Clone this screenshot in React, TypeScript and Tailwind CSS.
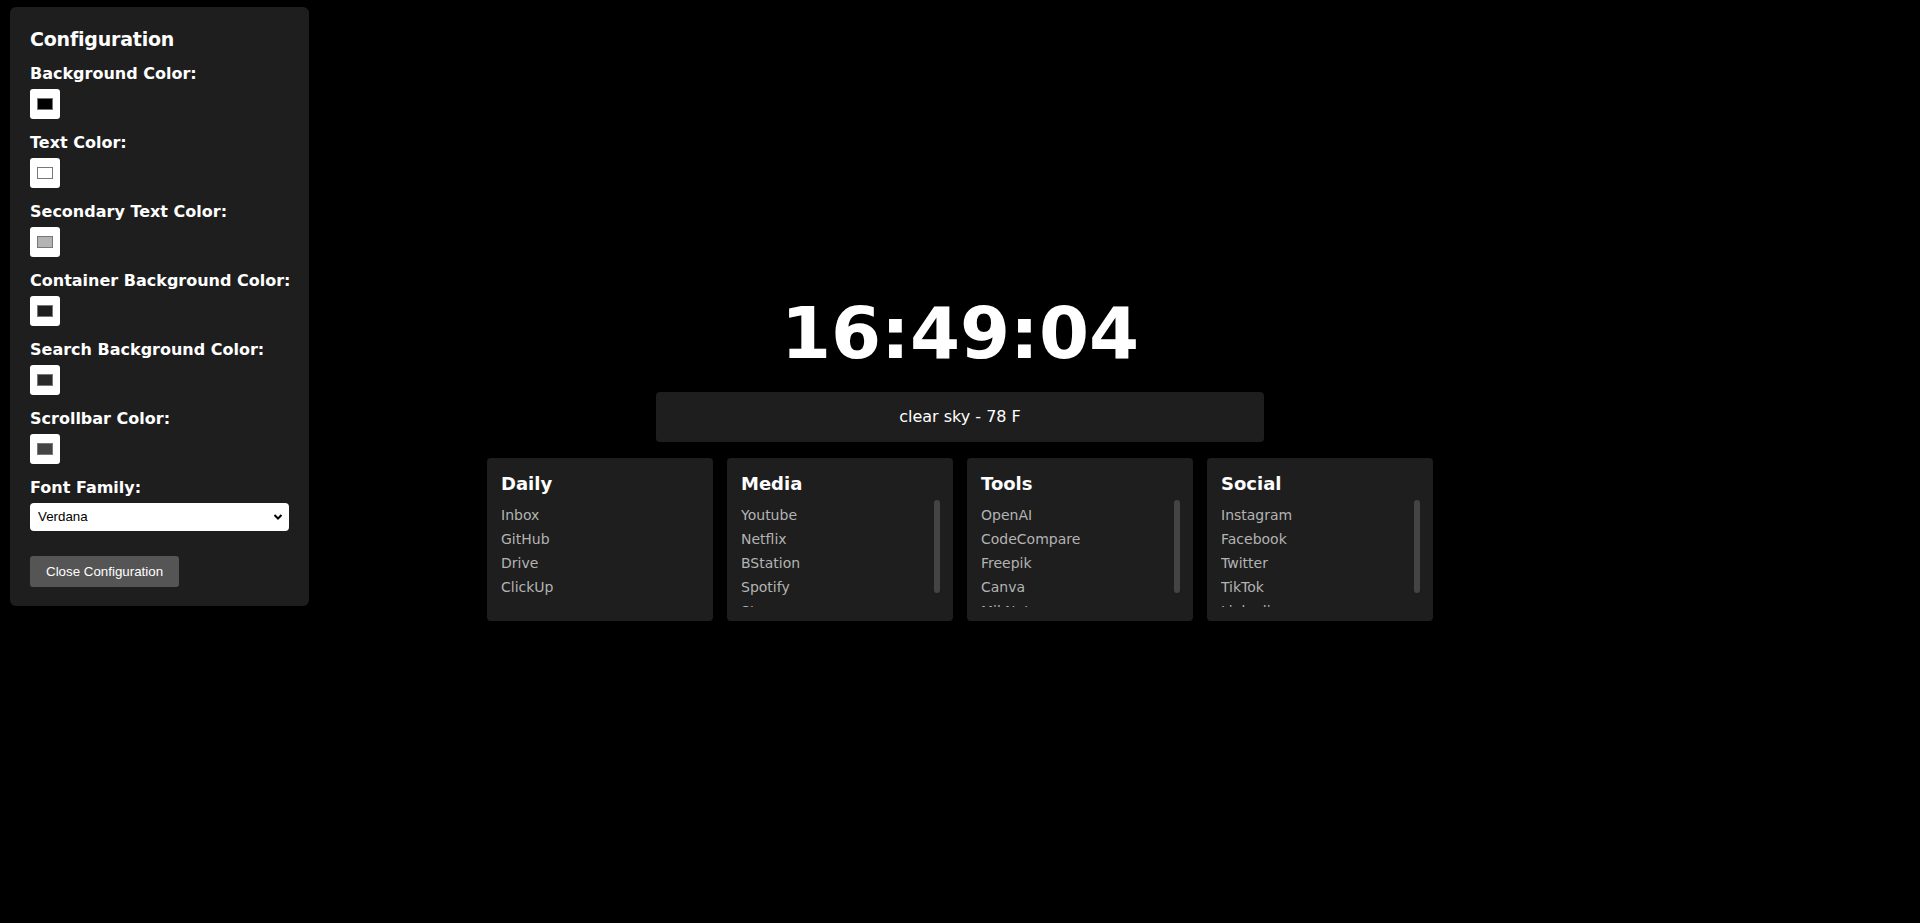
import { useState } from 'react'

const swatches = [
  { label: 'Background Color:', fill: 'bg-[#000000]' },
  { label: 'Text Color:', fill: 'bg-[#ffffff]' },
  { label: 'Secondary Text Color:', fill: 'bg-[#b3b3b3]' },
  { label: 'Container Background Color:', fill: 'bg-[#1e1e1e]' },
  { label: 'Search Background Color:', fill: 'bg-[#2a2a2a]' },
  { label: 'Scrollbar Color:', fill: 'bg-[#444444]' },
]

const groups = [
  { title: 'Daily', links: ['Inbox', 'GitHub', 'Drive', 'ClickUp'] },
  { title: 'Media', links: ['Youtube', 'Netflix', 'BStation', 'Spotify', 'Steam'] },
  { title: 'Tools', links: ['OpenAI', 'CodeCompare', 'Freepik', 'Canva', 'MikNet'] },
  { title: 'Social', links: ['Instagram', 'Facebook', 'Twitter', 'TikTok', 'Linkedin'] },
]

function ConfigPanel() {
  const [font, setFont] = useState('Verdana')
  return (
    <div className="fixed left-[10px] top-[7px] w-[299px] rounded-md bg-[#1e1e1e] px-5 pt-5 pb-[19px]">
      <h3 className="mb-[13px] text-[19px] leading-6 font-bold tracking-[-0.2px]">Configuration</h3>
      {swatches.map((s) => (
        <div key={s.label} className="mb-[14px]">
          <label className="mb-[5px] block whitespace-nowrap text-base leading-5 font-bold">{s.label}</label>
          <div className="flex h-[30px] w-[30px] items-center justify-center rounded-[3px] bg-white">
            <div className={`h-[12px] w-[16px] border border-[#777] ${s.fill}`} />
          </div>
        </div>
      ))}
      <label className="mb-[5px] block text-base leading-5 font-bold">Font Family:</label>
      <div className="relative">
        <select
          value={font}
          onChange={(e) => setFont(e.target.value)}
          className="h-[28px] w-full appearance-none rounded-[4px] bg-white pl-[8px] font-['Liberation_Sans',Arial,sans-serif] text-[13.33px] text-black outline-none"
        >
          <option>Verdana</option>
          <option>Arial</option>
          <option>Tahoma</option>
        </select>
        <svg className="pointer-events-none absolute right-[6px] top-[10px]" width="10" height="8" viewBox="0 0 10 8">
          <path d="M1.5 2 L5 5.5 L8.5 2" fill="none" stroke="#000" strokeWidth="2" />
        </svg>
      </div>
      <button className="mt-[25px] rounded-[3px] bg-[#555555] px-4 py-2 font-['Liberation_Sans',Arial,sans-serif] text-[13.33px] leading-[15px] text-white">
        Close Configuration
      </button>
    </div>
  )
}

function LinkCard({ title, links }: { title: string; links: string[] }) {
  // 5 rows overflow the 107px box, so a scrollbar thumb shows
  const scrolls = links.length > 4
  return (
    <div className="w-[226px] rounded-[4px] bg-[#1e1e1e] pt-[14px] pb-[14px] pl-[14px] pr-[13px]">
      <h2 className="mb-[4px] text-[18px] leading-6 font-bold">{title}</h2>
      <div className="relative">
        <ul className="h-[107px] overflow-hidden pt-[3px] pr-[6px]">
          {links.map((l) => (
            <li key={l}>
              <a href="#" className="text-[14px] leading-6 text-[#b3b3b3]">{l}</a>
            </li>
          ))}
        </ul>
        {scrolls && <div className="absolute right-0 top-0 h-[93px] w-[6px] rounded-[3px] bg-[#444444]" />}
      </div>
    </div>
  )
}

export default function App() {
  return (
    <div className="min-h-screen bg-black font-['DejaVu_Sans',Verdana,sans-serif] text-white">
      <div className="flex flex-col items-center pt-[291px]">
        <div className="mb-[17px] text-[72px] leading-[84px] font-bold">16:49:04</div>
        <div className="mb-[16px] w-[608px] rounded-[4px] bg-[#1e1e1e] py-[15px] text-center text-base leading-5">
          clear sky - 78 F
        </div>
        <div className="flex gap-[14px]">
          {groups.map((g) => (
            <LinkCard key={g.title} title={g.title} links={g.links} />
          ))}
        </div>
      </div>
      <ConfigPanel />
    </div>
  )
}
